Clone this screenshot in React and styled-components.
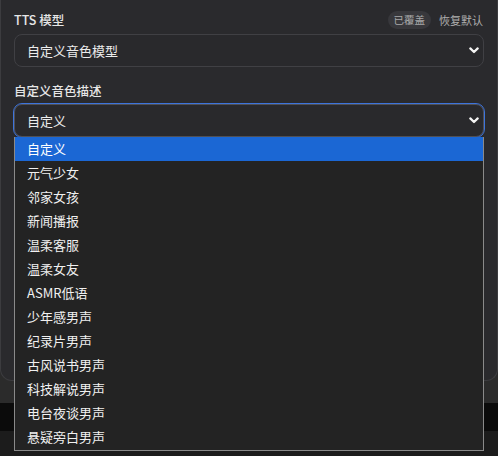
import React from "react";
import styled, { createGlobalStyle } from "styled-components";

const Global = createGlobalStyle`
  html, body { margin: 0; padding: 0; background: #2b2b2b; }
  body { font-family: "Noto Sans CJK SC", "Noto Sans", sans-serif; }
  * { box-sizing: border-box; }
`;

const Page = styled.div`
  position: relative;
  width: 498px;
  height: 456px;
  overflow: hidden;
  display: flex;
  flex-direction: column;
  background: #2b2b2b;
`;

const Card = styled.div`
  height: 381px;
  flex: none;
  background: #2a2a2d;
  border: 1px solid #3c3c3f;
  border-top: none;
  border-radius: 0 0 12px 12px;
  padding: 11px 13px 0 13px;
  display: flex;
  flex-direction: column;
  gap: 16px;
`;

const Field = styled.div`
  display: flex;
  flex-direction: column;
  gap: 5px;
`;

const HeaderRow = styled.div`
  display: flex;
  align-items: center;
  height: 18px;
`;

const Label = styled.div`
  flex: 1;
  font-size: 12.5px;
  font-weight: 500;
  color: #e6e6e6;
  line-height: 16px;
`;

const Badge = styled.span`
  height: 18px;
  padding: 0 6px;
  border-radius: 9px;
  background: #38383c;
  color: #a8a8a8;
  font-size: 10.5px;
  line-height: 18px;
  margin-right: 8px;
`;

const Reset = styled.span`
  color: #b0b0b0;
  font-size: 11px;
  line-height: 18px;
  margin-right: 1px;
`;

const Select = styled.div`
  height: 33px;
  border: 1px solid ${(p) => (p.$focus ? "#505055" : "#404044")};
  border-radius: 8px;
  background: #29292c;
  display: flex;
  align-items: center;
  padding: 0 4px 0 12px;
  color: #ececec;
  font-size: 13px;
  ${(p) => (p.$focus ? "outline: 1.5px solid #3d74dc; outline-offset: 0px;" : "")}
`;

const SelectText = styled.span`
  flex: 1;
`;

const Chevron = () => (
  <svg width="10" height="7" viewBox="0 0 10 7">
    <path d="M1.3 1.4 L5 5 L8.7 1.4" fill="none" stroke="#f4f4f4" strokeWidth="2.2" strokeLinecap="round" strokeLinejoin="round" />
  </svg>
);

const Band = styled.div`
  height: ${(p) => p.$h}px;
  flex: ${(p) => (p.$grow ? 1 : "none")};
  background: ${(p) => p.$bg};
`;

const Menu = styled.ul`
  position: absolute;
  left: 14px;
  top: 137px;
  width: 470px;
  margin: 0;
  padding: 0 0 1px 0;
  list-style: none;
  background: #232323;
  border: 1px solid #8a8a8a;
  border-top: none;
`;

const Item = styled.li`
  height: 24px;
  line-height: 24px;
  padding-left: 12px;
  font-size: 13px;
  color: ${(p) => (p.$active ? "#ffffff" : "#f0f0f0")};
  background: ${(p) => (p.$active ? "#1b67d4" : "transparent")};
`;

const options = [
  "自定义",
  "元气少女",
  "邻家女孩",
  "新闻播报",
  "温柔客服",
  "温柔女友",
  "ASMR低语",
  "少年感男声",
  "纪录片男声",
  "古风说书男声",
  "科技解说男声",
  "电台夜谈男声",
  "悬疑旁白男声",
];

export default function App() {
  return (
    <Page>
      <Global />
      <Card>
        <Field>
          <HeaderRow>
            <Label>TTS 模型</Label>
            <Badge>已覆盖</Badge>
            <Reset>恢复默认</Reset>
          </HeaderRow>
          <Select>
            <SelectText>自定义音色模型</SelectText>
            <Chevron />
          </Select>
        </Field>
        <Field>
          <Label>自定义音色描述</Label>
          <Select $focus>
            <SelectText>自定义</SelectText>
            <Chevron />
          </Select>
        </Field>
      </Card>
      <Band $h={22} $bg="#2b2b2b" />
      <Band $h={28} $bg="#0b0b0b" />
      <Band $grow $bg="#1c1c1c" />
      <Menu>
        {options.map((o, i) => (
          <Item key={o} $active={i === 0}>{o}</Item>
        ))}
      </Menu>
    </Page>
  );
}
